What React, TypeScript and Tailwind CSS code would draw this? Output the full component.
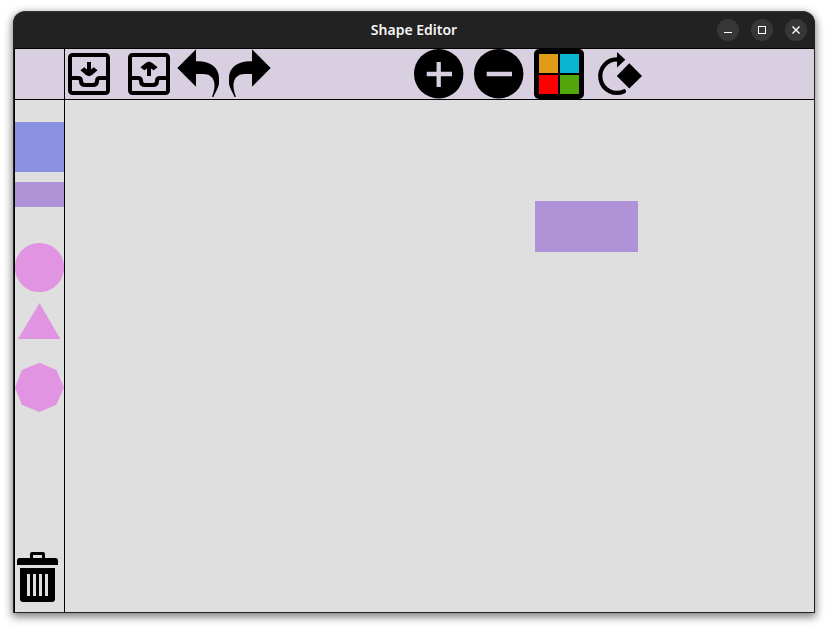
import type { ReactNode } from "react";

function ToolButton({ label, children }: { label: string; children: ReactNode }) {
  return (
    <button type="button" aria-label={label} title={label} className="block h-[50px] w-[50px] shrink-0">
      <svg viewBox="0 0 50 50" width="50" height="50" fill="black" aria-hidden="true">
        {children}
      </svg>
    </button>
  );
}

function PaletteButton({ label, children }: { label: string; children: ReactNode }) {
  return (
    <button type="button" aria-label={label} title={label} className="block h-[50px] w-full shrink-0">
      <svg viewBox="0 0 49 50" width="49" height="50" aria-hidden="true">
        {children}
      </svg>
    </button>
  );
}

function Tray() {
  return (
    <g fill="none" stroke="black" strokeWidth="4">
      <rect x="5" y="6" width="38" height="38" rx="2.5" />
      <path d="M5 29H13Q16 29 16 32Q16 36 20 36H28Q32 36 32 32Q32 29 35 29H43" />
    </g>
  );
}

const undoPath =
  "M2.3 19L21 0.3V12.3C36 11.8 44 19 44 29V34C44 38 40 44 38.3 48.3L37 47.7C42 36 40 25 28 25H21V37.7Z";

function WindowButton({ label, children }: { label: string; children: ReactNode }) {
  return (
    <button
      type="button"
      aria-label={label}
      className="flex h-[22px] w-[22px] items-center justify-center rounded-full bg-[#373737]"
    >
      <svg viewBox="0 0 22 22" width="22" height="22" fill="none" stroke="white" aria-hidden="true">
        {children}
      </svg>
    </button>
  );
}

export default function App() {
  return (
    <div className="flex h-screen bg-white px-[13px] pt-[11px] pb-4 font-['Noto_Sans',sans-serif]">
      <div className="flex min-w-0 flex-1 flex-col overflow-hidden rounded-t-xl border border-[#222222] border-t-[#343434] bg-[#222222] shadow-[0_3px_8px_1px_rgba(0,0,0,0.5)]">
        <header className="grid h-9 shrink-0 grid-cols-[1fr_auto_1fr] items-center pr-[7px] pl-[7px]">
          <h1 className="col-start-2 text-sm font-semibold text-[#f5f5f5]">Shape Editor</h1>
          <div className="flex justify-end gap-3">
            <WindowButton label="Minimize">
              <path d="M7 13.5H15" />
            </WindowButton>
            <WindowButton label="Maximize">
              <rect x="7.5" y="7.5" width="7" height="7" />
            </WindowButton>
            <WindowButton label="Close">
              <path d="M7.5 7.5L14.5 14.5M14.5 7.5L7.5 14.5" strokeWidth="1.4" />
            </WindowButton>
          </div>
        </header>

        <div className="flex min-h-0 flex-1 flex-col border-t border-l border-black bg-[#dfdfdf]">
          <div className="flex h-[51px] shrink-0 border-b border-black bg-[#d8cfe0]">
            <div className="w-[50px] shrink-0 border-r border-black" />
            <div className="flex gap-[10px]">
              <ToolButton label="Save">
                <Tray />
                <path d="M22 13H26V20.5L28.7 18.3L32.6 21.3L27 26L24 27.3L21 26L15.4 21.3L19.3 18.3L22 20.5Z" />
              </ToolButton>
              <ToolButton label="Load">
                <Tray />
                <path d="M22 27H26V19.5L28.7 21.2L32.6 18.2L27 13.7L24 12.5L21 13.7L15.4 18.2L19.3 21.2L22 19.5Z" />
              </ToolButton>
            </div>
            <div className="flex">
              <ToolButton label="Undo">
                <path d={undoPath} />
              </ToolButton>
              <ToolButton label="Redo">
                <path d={undoPath} transform="translate(48 0) scale(-1 1)" />
              </ToolButton>
            </div>
            <div className="ml-[139px] flex gap-[10px]">
              <ToolButton label="Enlarge">
                <circle cx="24.7" cy="24.7" r="24.7" />
                <path d="M12.7 25H38M24.7 13V38" stroke="#d8cfe0" strokeWidth="4.3" />
              </ToolButton>
              <ToolButton label="Shrink">
                <circle cx="24.7" cy="24.7" r="24.7" />
                <path d="M12.7 25H38" stroke="#d8cfe0" strokeWidth="4.3" />
              </ToolButton>
              <ToolButton label="Colour">
                <rect width="50" height="50" rx="5" />
                <rect x="5" y="5" width="19" height="19" fill="#e09c16" />
                <rect x="26" y="5" width="19" height="19" fill="#08b6d4" />
                <rect x="5" y="26" width="19" height="19" fill="#ff0000" />
                <rect x="26" y="26" width="19" height="19" fill="#52a60a" />
              </ToolButton>
              <ToolButton label="Rotate">
                <path
                  d="M24 10.5A16.7 16.7 0 1 0 30 42.3"
                  fill="none"
                  stroke="black"
                  strokeWidth="4.2"
                  strokeLinecap="round"
                />
                <path d="M23 3L31.3 10.7L23 18.5Z" />
                <path d="M35.3 14.3L48 27L35.3 39.6L22.8 27Z" />
              </ToolButton>
            </div>
          </div>

          <div className="flex min-h-0 flex-1">
            <aside className="flex w-[50px] shrink-0 flex-col gap-[10px] border-r border-black pt-[22px] pb-[10px]">
              <PaletteButton label="Square">
                <rect width="49" height="50" fill="#8a91e1" />
              </PaletteButton>
              <PaletteButton label="Rectangle">
                <rect width="49" height="25" fill="#af93d6" />
              </PaletteButton>
              <PaletteButton label="Circle">
                <circle cx="24.5" cy="25.5" r="24.6" fill="#e194e1" />
              </PaletteButton>
              <PaletteButton label="Triangle">
                <path d="M24.5 1L45.3 37H3Z" fill="#e194e1" />
              </PaletteButton>
              <PaletteButton label="Octagon">
                <path d="M24.5 0.8L41.4 7.9L49 25.5L41.4 42.8L24.5 50L6.9 42.8L0 25.5L6.9 7.9Z" fill="#e194e1" />
              </PaletteButton>
              <div className="mt-auto">
                <PaletteButton label="Delete">
                  <path
                    fillRule="evenodd"
                    d="M15 6V2Q15 0 17 0H28Q30 0 30 2V6H40.5Q43 6 43 9V13H2V9Q2 6 4.5 6ZM18 3V6H27V3ZM5 16H40V47Q40 50 37 50H8Q5 50 5 47ZM12 22V44H15V22ZM18 22V44H21V22ZM24 22V44H27V22ZM30 22V44H33V22Z"
                  />
                </PaletteButton>
              </div>
            </aside>
            <main className="relative min-w-0 flex-1 overflow-hidden" aria-label="Canvas">
              <div className="absolute top-[101px] left-[470px] h-[51px] w-[103px] bg-[#af93d6]" />
            </main>
          </div>
        </div>
      </div>
    </div>
  );
}
